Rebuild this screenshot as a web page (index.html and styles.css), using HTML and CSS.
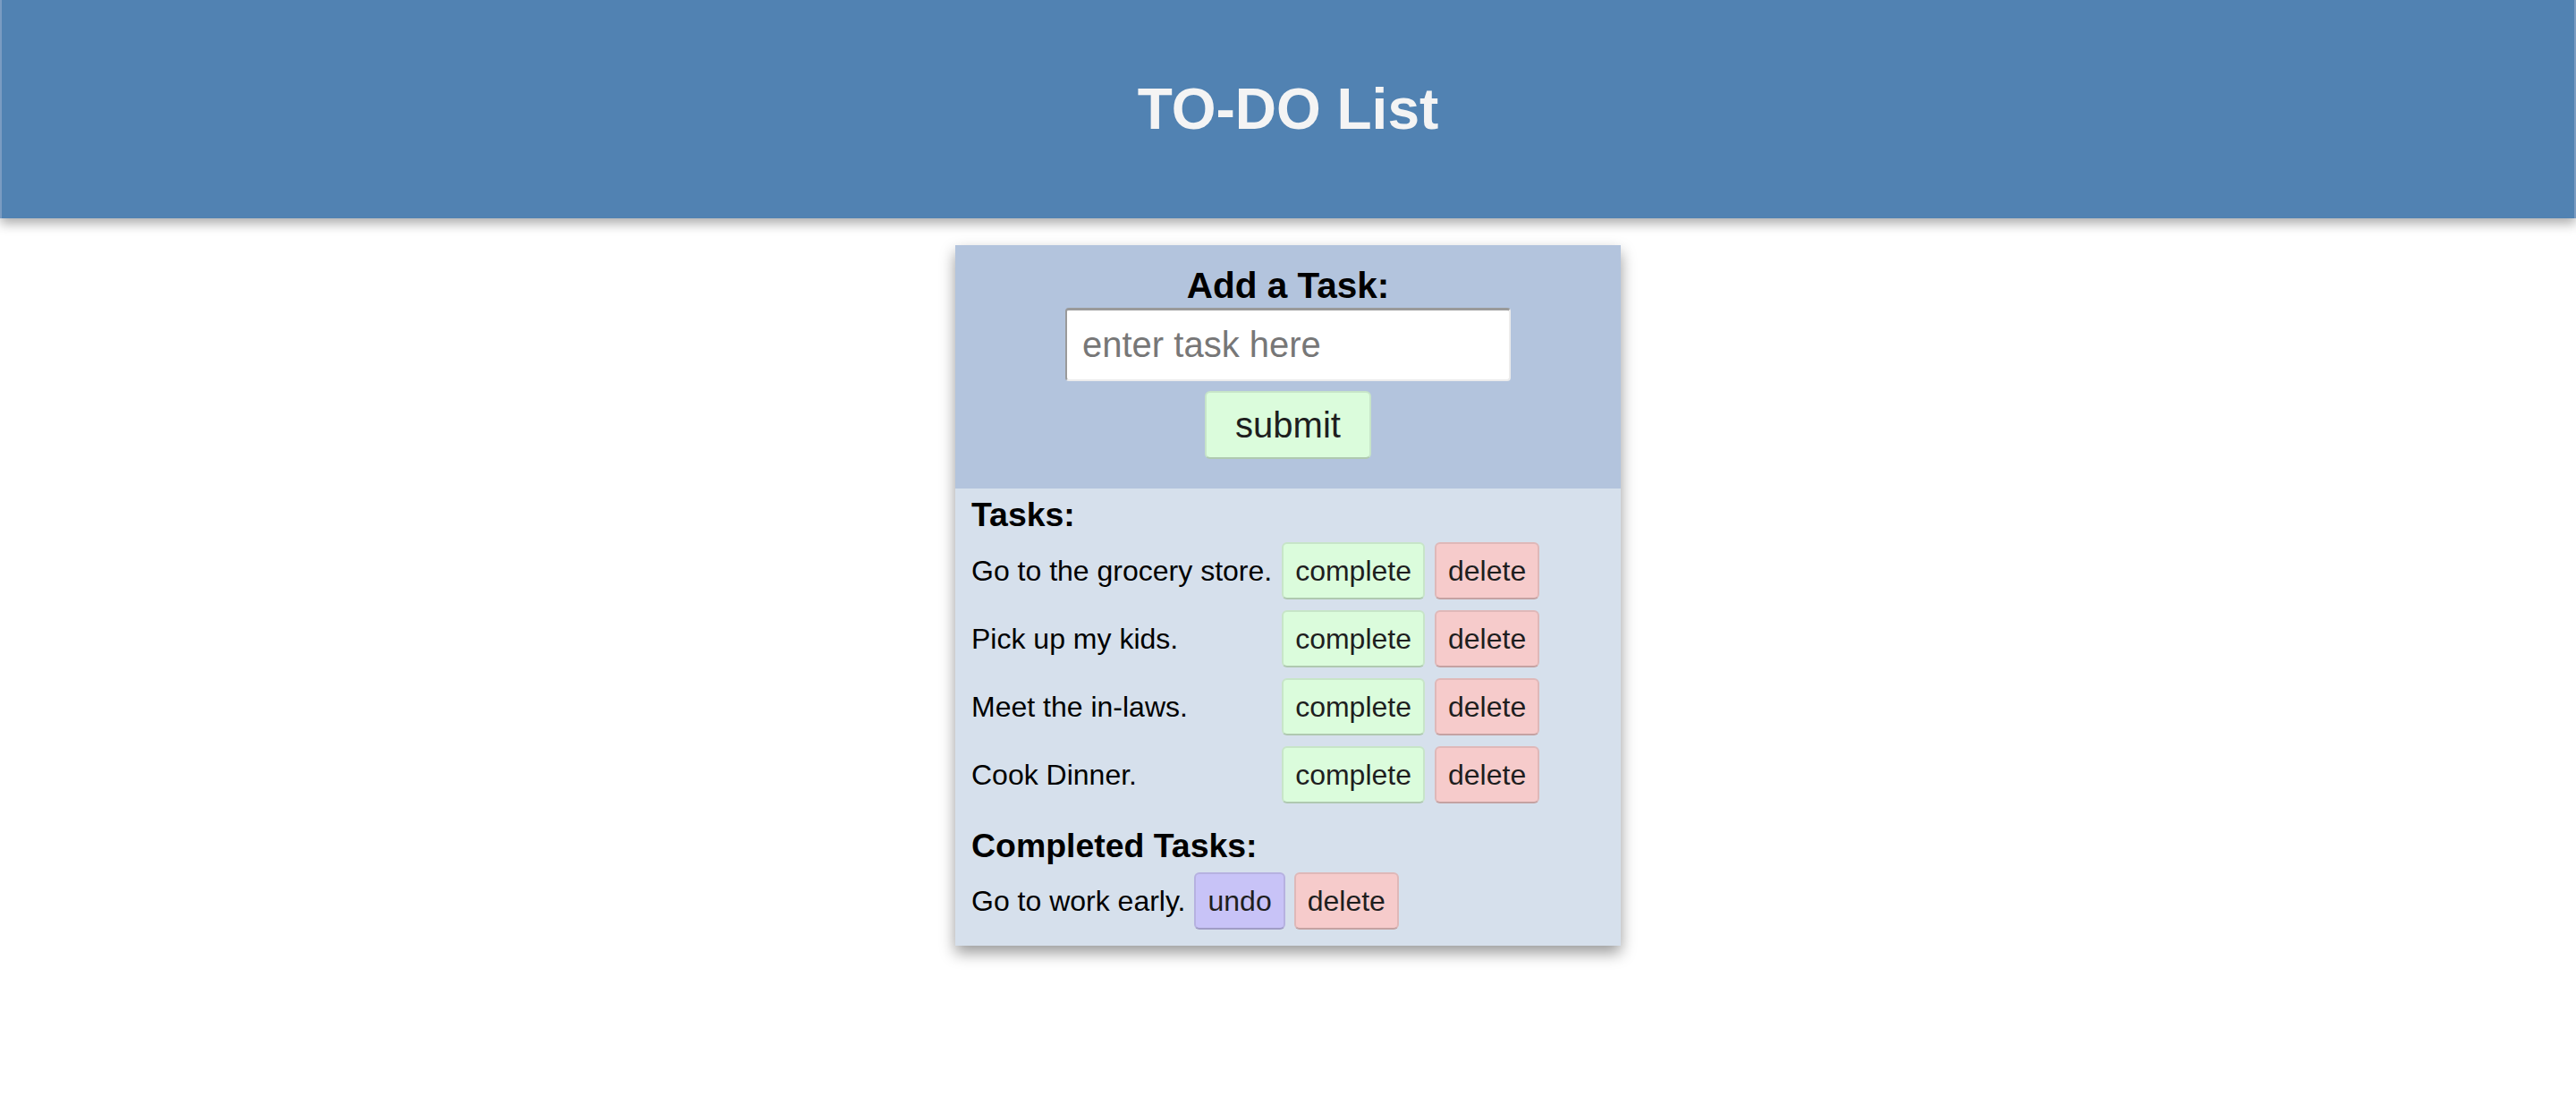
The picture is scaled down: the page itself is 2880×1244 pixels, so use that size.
FILE: index.html
```html
<!DOCTYPE html>
<html lang="en">
<head>
<meta charset="utf-8">
<title>TO-DO List</title>
<link rel="stylesheet" href="styles.css">
</head>
<body>
<header class="site-header">
  <h1 class="site-title">TO-DO List</h1>
</header>
<main class="card">
  <section class="add-section">
    <h2 class="add-title">Add a Task:</h2>
    <input class="task-input" type="text" placeholder="enter task here">
    <button class="btn btn-submit" type="button">submit</button>
  </section>
  <section class="list-section">
    <h3 class="list-title">Tasks:</h3>
    <div class="task-grid">
      <span class="task-text">Go to the grocery store.</span>
      <button class="btn btn-complete" type="button">complete</button>
      <button class="btn btn-delete" type="button">delete</button>

      <span class="task-text">Pick up my kids.</span>
      <button class="btn btn-complete" type="button">complete</button>
      <button class="btn btn-delete" type="button">delete</button>

      <span class="task-text">Meet the in-laws.</span>
      <button class="btn btn-complete" type="button">complete</button>
      <button class="btn btn-delete" type="button">delete</button>

      <span class="task-text">Cook Dinner.</span>
      <button class="btn btn-complete" type="button">complete</button>
      <button class="btn btn-delete" type="button">delete</button>
    </div>
    <h3 class="list-title completed-title">Completed Tasks:</h3>
    <div class="done-row">
      <span class="task-text">Go to work early.</span>
      <button class="btn btn-undo" type="button">undo</button>
      <button class="btn btn-delete" type="button">delete</button>
    </div>
  </section>
</main>
</body>
</html>
```

FILE: styles.css
```css
* {
  box-sizing: border-box;
}

body {
  margin: 0;
  background: #ffffff;
  font-family: "Liberation Sans", Arial, Helvetica, sans-serif;
  color: #000;
}

.site-header {
  height: 244px;
  padding-top: 85px;
  background: #5182b2;
  border-left: 2px solid #7a9bc2;
  border-right: 2px solid #7a9bc2;
  box-shadow: 0 6px 12px rgba(0, 0, 0, 0.32);
  text-align: center;
}

.site-title {
  margin: 0;
  font-size: 64px;
  line-height: 74px;
  font-weight: bold;
  color: #f4f4f4;
}

.card {
  width: 744px;
  margin: 30px auto 40px;
  box-shadow: 0 8px 16px rgba(0, 0, 0, 0.4);
}

.add-section {
  height: 272px;
  padding-top: 22px;
  background: #b3c4dd;
  display: flex;
  flex-direction: column;
  align-items: center;
}

.add-title {
  margin: 0;
  font-size: 40.5px;
  line-height: 46px;
  font-weight: bold;
}

.task-input {
  width: 498px;
  height: 82px;
  margin-top: 2px;
  padding: 0 17px;
  font-family: inherit;
  font-size: 40px;
  color: #000;
  background: #fff;
  border-style: solid;
  border-width: 3px 2px 2px 2px;
  border-color: #9a9a9a #ececec #ececec #9a9a9a;
  border-radius: 4px;
  outline: none;
}

.task-input::placeholder {
  color: #777777;
}

.btn {
  height: 64px;
  padding: 0 13px;
  font-family: inherit;
  font-size: 32px;
  line-height: 1;
  color: #1e1e1e;
  border: 2px solid rgba(0, 0, 0, 0.09);
  border-bottom-color: rgba(0, 0, 0, 0.2);
  border-radius: 6px;
  cursor: pointer;
}

.btn-submit {
  height: 76px;
  margin-top: 11px;
  padding: 0 32px;
  font-size: 40px;
  background: #dbfcdc;
}

.btn-complete {
  background: #dbfcdc;
}

.btn-delete {
  background: #f6cbcb;
}

.btn-undo {
  background: #c8c3f7;
}

.list-section {
  padding: 8px 18px 18px;
  background: #d6e0ec;
}

.list-title {
  margin: 0 0 10px;
  font-size: 37.44px;
  line-height: 42px;
  font-weight: bold;
}

.completed-title {
  margin-top: 26px;
  margin-bottom: 9px;
}

.task-grid {
  display: grid;
  grid-template-columns: max-content max-content max-content;
  column-gap: 11px;
  row-gap: 12px;
  align-items: center;
}

.task-text {
  font-size: 32px;
}

.done-row {
  display: flex;
  align-items: center;
  gap: 10px;
}
```
